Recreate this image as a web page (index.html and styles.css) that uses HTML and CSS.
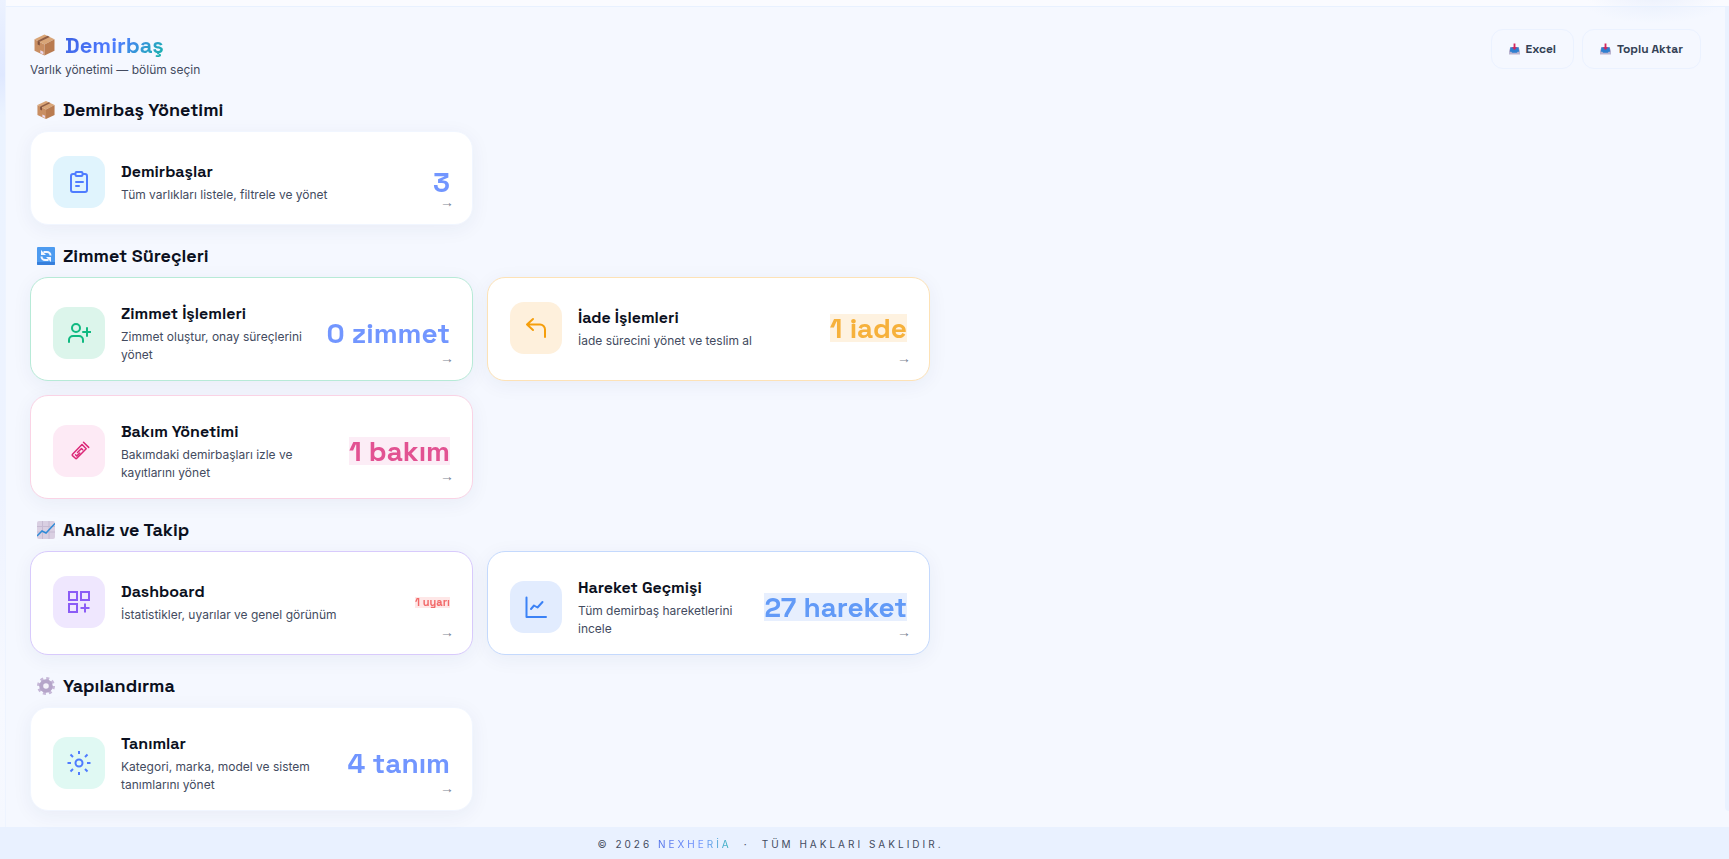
FILE: index.html
```html
<!DOCTYPE html>
<html lang="tr">
<head>
  <meta charset="UTF-8">
  <meta name="viewport" content="width=device-width, initial-scale=1.0">
  <title>Demirbaş</title>
  <link rel="stylesheet" href="styles.css">
</head>
<body>
  <!-- shared emoji -->
  <svg class="defs" aria-hidden="true">
    <symbol id="box" viewBox="0 0 20 20">
      <path d="M10 0 19.500 4.500 10 9.500.5 4.500z" fill="#d9a577"/>
      <path d="M.5 4.500 10 9.500V20L.5 15.500z" fill="#c98e62"/>
      <path d="M19.500 4.500 10 9.500V20l9.500-4.500z" fill="#b97b50"/>
      <path d="m3.500 6 9.500-4.700 2 1L5.500 7z" fill="#8f5d45"/>
      <path d="M3.500 6 5.500 7v3.500l-2-1z" fill="#7d4f3c"/>
      <path d="m6 15 3 1.500V19l-3-1.500z" fill="#ead9ee"/>
    </symbol>
    <symbol id="inbox" viewBox="0 0 12 12">
      <path d="M1.500 4h9L12 8v4H0V8z" fill="#b9b3cf"/>
      <path d="M1.500 4h9l.5 5H9.500l-1 1h-5l-1-1H1z" fill="#2f7fd0"/>
      <path d="M5 0h2v4h1.800L6 7 3.200 4H5z" fill="#d3265c"/>
    </symbol>
  </svg>

  <div class="topbar"></div>
  <div class="sidebar"></div>

  <main class="content">
    <header class="page-header">
      <div>
        <h1 class="page-title"><svg class="title-emoji"><use href="#box"/></svg><span class="gradient-text">Demirbaş</span></h1>
        <p class="page-subtitle">Varlık yönetimi — bölüm seçin</p>
      </div>
      <div class="actions">
        <button class="btn" type="button"><svg><use href="#inbox"/></svg>Excel</button>
        <button class="btn" type="button"><svg><use href="#inbox"/></svg>Toplu Aktar</button>
      </div>
    </header>

    <section>
      <h2 class="section-title"><svg><use href="#box"/></svg>Demirbaş Yönetimi</h2>
      <div class="cards">
        <a class="card" href="#demirbaslar">
          <div class="card-body">
            <span class="icon sky">
              <svg viewBox="0 0 24 24"><path d="M8 4H6a2 2 0 0 0-2 2v14a2 2 0 0 0 2 2h12a2 2 0 0 0 2-2V6a2 2 0 0 0-2-2h-2"/><rect x="8.500" y="2" width="7" height="4" rx="1"/><path d="M9 12h7M9 16h3"/></svg>
            </span>
            <div class="text">
              <h3>Demirbaşlar</h3>
              <p>Tüm varlıkları listele, filtrele ve yönet</p>
            </div>
            <span class="value">3</span>
          </div>
          <span class="arrow">→</span>
        </a>
      </div>
    </section>

    <section>
      <h2 class="section-title">
        <svg viewBox="0 0 18 18"><rect width="18" height="18" rx="1" fill="#4d9bf0"/><path d="M0 15h18v2a1 1 0 0 1-1 1H1a1 1 0 0 1-1-1z" fill="#367fdc"/><path d="M6.500 5H10a3.500 3.500 0 0 1 3.500 3.500M11.500 13H8a3.500 3.500 0 0 1-3.500-3.500" fill="none" stroke="#f4f7ff" stroke-width="2"/><path d="M4 3v5h5zM14 15v-5H9z" fill="#f4f7ff"/></svg>Zimmet Süreçleri
      </h2>
      <div class="cards">
        <a class="card green-card" href="#zimmet">
          <div class="card-body">
            <span class="icon green">
              <svg viewBox="0 0 24 24"><circle cx="9" cy="7" r="4"/><path d="M2 21v-2a4 4 0 0 1 4-4h6a4 4 0 0 1 4 4v2M20 7v8M16 11h8"/></svg>
            </span>
            <div class="text">
              <h3>Zimmet İşlemleri</h3>
              <p>Zimmet oluştur, onay süreçlerini yönet</p>
            </div>
            <span class="value">0 zimmet</span>
          </div>
          <span class="arrow">→</span>
        </a>
        <a class="card orange-card" href="#iade">
          <div class="card-body">
            <span class="icon orange">
              <svg viewBox="0 0 24 24"><path d="M9 14 3 8.500 9 3M3 8.500h13a5 5 0 0 1 5 5V21"/></svg>
            </span>
            <div class="text">
              <h3>İade İşlemleri</h3>
              <p>İade sürecini yönet ve teslim al</p>
            </div>
            <span class="value value-orange">1 iade</span>
          </div>
          <span class="arrow">→</span>
        </a>
        <a class="card pink-card" href="#bakim">
          <div class="card-body">
            <span class="icon pink">
              <svg viewBox="0 0 24 24" class="fine"><path d="M5.500 15.200 15 5.500l4.200 4.300-9.400 9.500a1 1 0 0 1-1.400 0l-2.900-2.700a1 1 0 0 1 0-1.400zM8.500 15.800l1.200 1.200 3-3M10.500 13.500l4-4 1.200 1.200M16.500 3.200l5.200 5.200"/></svg>
            </span>
            <div class="text">
              <h3>Bakım Yönetimi</h3>
              <p>Bakımdaki demirbaşları izle ve kayıtlarını yönet</p>
            </div>
            <span class="value value-pink">1 bakım</span>
          </div>
          <span class="arrow">→</span>
        </a>
      </div>
    </section>

    <section>
      <h2 class="section-title">
        <svg viewBox="0 0 18 18"><rect width="18" height="18" rx="2" fill="#d9cfe2"/><path d="M0 5.500h18M0 11h18M5.500 0v18M12 0v18" stroke="#c6bad2"/><path d="m0 15 5-5 4 2 9-9.500" fill="none" stroke="#2f8bd8" stroke-width="1.500"/></svg>Analiz ve Takip
      </h2>
      <div class="cards">
        <a class="card purple-card" href="#dashboard">
          <div class="card-body">
            <span class="icon purple">
              <svg viewBox="0 0 24 24" class="sharp"><path d="M2 2h8v8H2zM14 2h8v8h-8zM2 14h8v8H2zM18 13.500v9M13.500 18h9"/></svg>
            </span>
            <div class="text">
              <h3>Dashboard</h3>
              <p>İstatistikler, uyarılar ve genel görünüm</p>
            </div>
            <span class="value value-alert">1 uyarı</span>
          </div>
          <span class="arrow">→</span>
        </a>
        <a class="card blue-card" href="#hareket">
          <div class="card-body">
            <span class="icon blue">
              <svg viewBox="0 0 24 24"><path d="M2.500 2.500V22H22M7 14l3-3.500 3.500 2L18.500 7"/></svg>
            </span>
            <div class="text">
              <h3>Hareket Geçmişi</h3>
              <p>Tüm demirbaş hareketlerini incele</p>
            </div>
            <span class="value value-blue">27 hareket</span>
          </div>
          <span class="arrow">→</span>
        </a>
      </div>
    </section>

    <section>
      <h2 class="section-title">
        <svg viewBox="0 0 18 18"><circle cx="9" cy="9" r="7.500" fill="none" stroke="#c6b8d8" stroke-width="3" stroke-dasharray="3 2.890"/><circle cx="9" cy="9" r="4.800" fill="#f4f2fa" stroke="#b5a5c9" stroke-width="4"/></svg>Yapılandırma
      </h2>
      <div class="cards">
        <a class="card" href="#tanimlar">
          <div class="card-body">
            <span class="icon mint">
              <svg viewBox="0 0 24 24" class="sharp"><circle cx="12" cy="12" r="3.500"/><path d="M12 0v3M12 21v3M.5 12h3.500M20 12h3.500M3.500 3.500 6 6M18 18l2.500 2.500M3.500 20.500 6 18M18 6l2.500-2.500"/></svg>
            </span>
            <div class="text">
              <h3>Tanımlar</h3>
              <p>Kategori, marka, model ve sistem tanımlarını yönet</p>
            </div>
            <span class="value">4 tanım</span>
          </div>
          <span class="arrow">→</span>
        </a>
      </div>
    </section>
  </main>

  <div class="rail"></div>

  <footer class="footer">
    <span>© 2026 <span class="brand">NEXHERİA</span></span>
    <span>·</span>
    <span>TÜM HAKLARI SAKLIDIR.</span>
  </footer>
</body>
</html>
```
FILE: styles.css
```css
* {
  box-sizing: border-box;
}
body {
  margin: 0;
  min-height: 100vh;
  display: grid;
  grid-template-columns: 6px 1fr 4px;
  grid-template-rows: 7px 1fr 32px;
  font-family: "Space Grotesk", Inter, sans-serif;
  color: #0b1020;
  background-color: #f5f8ff;
}
h1, h2, h3, p {
  margin: 0;
}
.defs {
  position: absolute;
  width: 0;
  height: 0;
}
.topbar {
  grid-column: 2 / 4;
  grid-row: 1;
  background: radial-gradient(ellipse 70px 26px at calc(100% - 75px) -8px, #e9effc, transparent) #fafbff;
  border-bottom: 1px solid #e8f1ff;
}
.sidebar {
  grid-column: 1;
  grid-row: 1 / 3;
  background: linear-gradient(#ecf2ff, #dfe8ff 9%, #ebf3ff 14%, #eef3ff 60%, #f7f9ff 85%, #f5f8ff);
  border-right: 1px solid #eef4ff;
}
.rail {
  grid-column: 3;
  grid-row: 2;
  margin-bottom: 16px;
  background-color: #eaf2ff;
  border-bottom-left-radius: 4px;
}
.content {
  grid-column: 2;
  grid-row: 2;
  padding: 22px 24px 16px;
  background: radial-gradient(ellipse 70px 20px at calc(100% - 71px) -4px, #ebf1fd, transparent);
}

/* header */
.page-header {
  display: flex;
  justify-content: space-between;
  align-items: flex-start;
}
.page-title {
  display: flex;
  align-items: center;
  gap: 10px;
  height: 32px;
  padding-left: 4px;
  font-size: 22px;
  font-weight: 700;
}
.title-emoji {
  width: 21px;
  height: 22px;
}
.gradient-text {
  background: linear-gradient(135deg, #3b5fe0, #4f7cff 50%, #14b8a6);
  -webkit-background-clip: text;
  background-clip: text;
  color: transparent;
}
.page-subtitle {
  font-family: Inter, sans-serif;
  font-size: 12px;
  line-height: 18px;
  color: #434b60;
}
.actions {
  display: flex;
  gap: 8px;
}
.btn {
  display: flex;
  align-items: center;
  gap: 6px;
  height: 40px;
  padding: 0 17px;
  border: 1px solid #ebf2ff;
  border-radius: 12px;
  background: none;
  color: #334155;
  font-family: inherit;
  font-size: 12px;
  font-weight: 600;
  cursor: pointer;
}
.btn svg {
  width: 11px;
  height: 12px;
}

/* sections */
.section-title {
  display: flex;
  align-items: center;
  gap: 8px;
  margin: 20px 0 10px;
  padding-left: 7px;
  font-size: 18px;
  line-height: 22px;
  font-weight: 600;
}
.section-title svg {
  width: 18px;
  height: 18px;
}
.cards {
  display: grid;
  grid-template-columns: 1fr 1fr;
  gap: 14px;
  max-width: 900px;
}
.card {
  position: relative;
  padding: 24px 22px 16px;
  border: 1px solid #f1f6ff;
  border-radius: 18px;
  background-color: #fff;
  box-shadow: 0 4px 20px rgba(30, 50, 110, 0.06);
  color: inherit;
  text-decoration: none;
}
.green-card {
  border-color: #b7ead7;
}
.orange-card {
  border-color: #fde2b6;
}
.pink-card {
  border-color: #fad3e5;
}
.purple-card {
  border-color: #d8cafc;
}
.blue-card {
  border-color: #c4d9fd;
}
.card-body {
  display: flex;
  align-items: center;
  gap: 16px;
}
.icon {
  flex: none;
  display: flex;
  align-items: center;
  justify-content: center;
  width: 52px;
  height: 52px;
  border-radius: 14px;
}
.icon svg {
  width: 24px;
  height: 24px;
  fill: none;
  stroke: currentColor;
  stroke-width: 2;
  stroke-linecap: round;
  stroke-linejoin: round;
}
.icon .fine {
  stroke-width: 1.5;
}
.icon .sharp {
  stroke-linecap: butt;
  stroke-linejoin: miter;
}
.icon.sky {
  background-color: #e0f4fd;
  color: #4f7cff;
}
.icon.green {
  background-color: #dcf5eb;
  color: #10b981;
}
.icon.orange {
  background-color: #fef0dc;
  color: #f59e0b;
}
.icon.pink {
  background-color: #fdeaf5;
  color: #db2777;
}
.icon.purple {
  background-color: #efe7fe;
  color: #8b5cf6;
}
.icon.blue {
  background-color: #e2ecfe;
  color: #3b82f6;
}
.icon.mint {
  background-color: #e0f9f3;
  color: #4f7cff;
}
.text {
  flex: 1;
}
.text h3 {
  margin-bottom: 3px;
  font-size: 16px;
  line-height: 23px;
  font-weight: 600;
}
.text p {
  font-family: Inter, sans-serif;
  font-size: 12px;
  line-height: 18px;
  color: #434b60;
}
.value {
  flex: none;
  font-size: 28px;
  line-height: 28px;
  font-weight: 700;
  color: #4f7cff;
  opacity: 0.8;
}
.value-orange {
  background-color: #feefd9;
  color: #f59e0b;
}
.value-pink {
  background-color: #fce9f4;
  color: #db2777;
}
.value-blue {
  background-color: #e2ecfe;
  color: #3b82f6;
}
.value-alert {
  background-color: #fee2e2;
  color: #ef4444;
  font-size: 11px;
  line-height: 11px;
}
.arrow {
  position: absolute;
  right: 18px;
  bottom: 14px;
  font-family: "Liberation Serif", serif;
  font-size: 14px;
  line-height: 14px;
  color: #7d8594;
}

.footer {
  grid-column: 1 / 4;
  grid-row: 3;
  display: flex;
  justify-content: center;
  align-items: center;
  gap: 12px;
  padding: 2px 188px 0 0;
  background-color: #e9f1ff;
  font-family: Inter, sans-serif;
  font-size: 10px;
  letter-spacing: 3px;
  color: #434b60;
}
.brand {
  background: linear-gradient(90deg, #4f6fe8, #6f94ff 60%, #2fb5b5);
  -webkit-background-clip: text;
  background-clip: text;
  color: transparent;
}
```
